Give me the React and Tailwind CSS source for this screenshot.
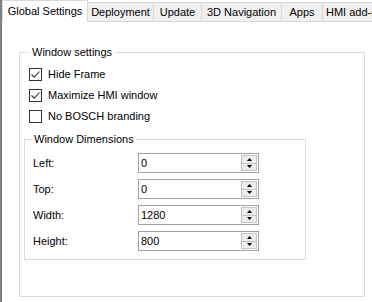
import React from 'react';

const tabs = [
  { label: 'Deployment', w: 'w-[66px]' },
  { label: 'Update', w: 'w-[48px]' },
  { label: '3D Navigation', w: 'w-[80px]' },
  { label: 'Apps', w: 'w-[41px]' },
  { label: 'HMI add-ons', w: 'w-[70px]' },
];

const CheckRow = ({ checked, label }) => (
  <div className="flex h-[21px] items-center gap-[6px]">
    <span className="flex h-[13px] w-[13px] items-center justify-center border border-[#333333] bg-white">
      {checked && (
        <svg width="11" height="11" viewBox="0 0 11 11">
          <path d="M1.5 5.5 L4.2 8.2 L9.5 2.5" fill="none" stroke="#333333" strokeWidth="1.1" />
        </svg>
      )}
    </span>
    <span>{label}</span>
  </div>
);

const Spinner = () => (
  <div className="mr-[1px] flex h-[16px] w-[16px] flex-col">
    <span className="flex flex-1 items-center justify-center border border-[#c4c4c4] bg-[#ededed]">
      <svg width="5" height="3" viewBox="0 0 5 3">
        <path d="M0 3 L2.5 0 L5 3 Z" fill="#000" />
      </svg>
    </span>
    <span className="flex flex-1 items-center justify-center border border-t-0 border-[#c4c4c4] bg-[#ededed]">
      <svg width="5" height="3" viewBox="0 0 5 3">
        <path d="M0 0 L5 0 L2.5 3 Z" fill="#000" />
      </svg>
    </span>
  </div>
);

const NumField = ({ label, value }) => (
  <div className="flex h-[26px] items-center">
    <span className="w-[105px]">{label}</span>
    <div className="flex h-[20px] w-[121px] items-center border border-[#a0a0a0] bg-white">
      <span className="flex-1 pl-[2px]">{value}</span>
      <Spinner />
    </div>
  </div>
);

export default function App() {
  return (
    <div className="h-[302px] w-[372px] overflow-hidden border-l-2 border-[#7f7f7f] bg-white font-['Liberation_Sans',Arial,sans-serif] text-[11px] leading-[13px] text-black">
      {/* tab strip */}
      <div className="flex h-[22px] items-end">
        <div className="flex h-[22px] w-[86px] shrink-0 items-center justify-center border border-b-0 border-[#d9d9d9] bg-white">
          Global Settings
        </div>
        {tabs.map((t) => (
          <div
            key={t.label}
            className={`flex h-[20px] shrink-0 items-center justify-center whitespace-nowrap border border-l-0 border-[#d9d9d9] bg-[#f0f0f0] pt-[1px] ${t.w}`}
          >
            {t.label}
          </div>
        ))}
      </div>

      {/* page */}
      <div className="pl-[17px] pt-[24px]">
        <fieldset className="w-[346px] border border-[#dcdcdc] pb-[36px] pl-[4px]">
          <legend className="ml-[5px] px-[3px]">Window settings</legend>
          <div className="pl-[5px] pt-[5px]">
            <CheckRow checked label="Hide Frame" />
            <CheckRow checked label="Maximize HMI window" />
            <CheckRow label="No BOSCH branding" />
          </div>

          <fieldset className="mt-[6px] w-[282px] border border-[#dcdcdc] pb-[5px] pl-[8px]">
            <legend className="px-[1px]">Window Dimensions</legend>
            <div className="pt-[4px]">
              <NumField label="Left:" value="0" />
              <NumField label="Top:" value="0" />
              <NumField label="Width:" value="1280" />
              <NumField label="Height:" value="800" />
            </div>
          </fieldset>
        </fieldset>
      </div>
    </div>
  );
}
